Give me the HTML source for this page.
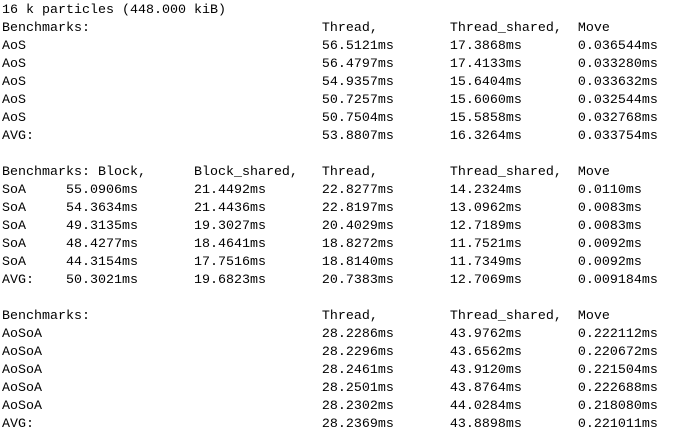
<!DOCTYPE html>
<html><head><meta charset="utf-8"><style>
html,body{margin:0;padding:0;background:#fff;width:679px;height:444px;overflow:hidden}
pre{margin:0;position:absolute;left:2px;top:2px;font-family:"Liberation Mono",monospace;font-size:13.33px;line-height:18px;color:#000}
</style></head><body><pre>16 k particles (448.000 kiB)
Benchmarks:                             Thread,         Thread_shared,  Move
AoS                                     56.5121ms       17.3868ms       0.036544ms
AoS                                     56.4797ms       17.4133ms       0.033280ms
AoS                                     54.9357ms       15.6404ms       0.033632ms
AoS                                     50.7257ms       15.6060ms       0.032544ms
AoS                                     50.7504ms       15.5858ms       0.032768ms
AVG:                                    53.8807ms       16.3264ms       0.033754ms

Benchmarks: Block,      Block_shared,   Thread,         Thread_shared,  Move
SoA     55.0906ms       21.4492ms       22.8277ms       14.2324ms       0.0110ms
SoA     54.3634ms       21.4436ms       22.8197ms       13.0962ms       0.0083ms
SoA     49.3135ms       19.3027ms       20.4029ms       12.7189ms       0.0083ms
SoA     48.4277ms       18.4641ms       18.8272ms       11.7521ms       0.0092ms
SoA     44.3154ms       17.7516ms       18.8140ms       11.7349ms       0.0092ms
AVG:    50.3021ms       19.6823ms       20.7383ms       12.7069ms       0.009184ms

Benchmarks:                             Thread,         Thread_shared,  Move
AoSoA                                   28.2286ms       43.9762ms       0.222112ms
AoSoA                                   28.2296ms       43.6562ms       0.220672ms
AoSoA                                   28.2461ms       43.9120ms       0.221504ms
AoSoA                                   28.2501ms       43.8764ms       0.222688ms
AoSoA                                   28.2302ms       44.0284ms       0.218080ms
AVG:                                    28.2369ms       43.8898ms       0.221011ms</pre></body></html>
